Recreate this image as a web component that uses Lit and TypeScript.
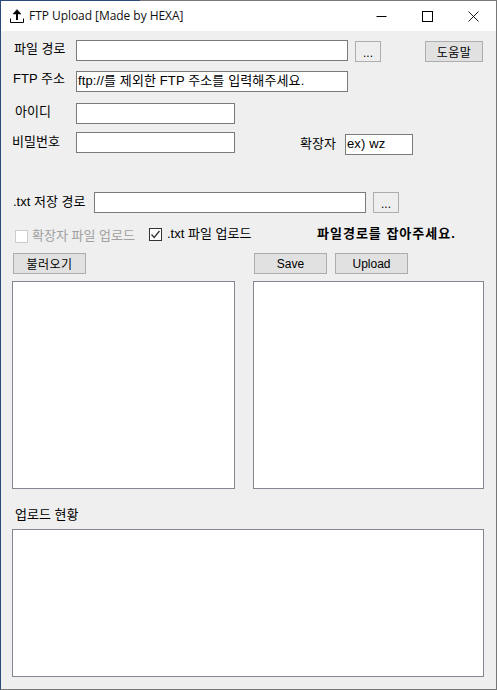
import { LitElement, html, css } from "lit";
import { customElement } from "lit/decorators.js";

@customElement("app-root")
export class AppRoot extends LitElement {
  static styles = css`
    :host { display: block; width: 497px; height: 690px; }
    * { box-sizing: border-box; }
    .window {
      width: 497px; height: 690px; display: flex; flex-direction: column;
      border-left: 1px solid #2b4a7a; border-right: 1px solid #777; border-bottom: 1px solid #777;
      background: #efefef; color: #000;
      font: 13px "Liberation Sans", "Noto Sans CJK KR", sans-serif;
    }
    .topline { height: 1px; flex: none; margin: 0 -1px; background: linear-gradient(90deg, #2b4a7a 0 140px, #7a7a7a 140px 100%); }
    .titlebar { height: 30px; flex: none; background: #fff; display: flex; align-items: center; }
    .app-icon { width: 14px; height: 14px; margin: 0 5px 0 9px; flex: none; }
    .title { font: 12px "Open Sans", sans-serif; flex: 1; color: #111; white-space: nowrap; letter-spacing: -0.05px; margin-top: -1px; }
    .ctl { width: 46px; height: 30px; display: flex; align-items: center; justify-content: center; flex: none; }
    .body { flex: 1; padding: 9px 12px 0 11px; display: flex; flex-direction: column; }
    .row { display: flex; align-items: flex-start; flex: none; }
    .label { white-space: nowrap; line-height: 16px; flex: none; }
    .field { background: #fff; border: 1px solid #7a7a7a; height: 21px; flex: none; line-height: 18px; padding-left: 1px; white-space: nowrap; overflow: hidden; letter-spacing: 0.12px; }
    .btn { height: 21px; flex: none; background: #e1e1e1; border: 1px solid #adadad; display: flex; align-items: center; justify-content: center; font-size: 12px; color: #000; }
    .btn.ko { letter-spacing: 0.5px; }
    .btn.more { background: #eeeeee; width: 26px; margin: 1px 0 0 7px; padding-top: 2px; }
    .w272 { width: 272px; }
    .w159 { width: 159px; }
    .box { background: #fff; border: 1px solid #828790; flex: none; }
    .check { width: 13px; height: 13px; background: #fff; border: 1px solid #333; flex: none; display: flex; align-items: center; justify-content: center; }
    .check.off { border-color: #ccc; }
    .check svg { display: block; }
    .muted { color: #a0a0a0; }
    .bold { font-weight: 700; letter-spacing: 1px; }

    .l-path { width: 64px; padding: 0 0 0 2px; margin-top: 1px; }
    .l-ftp { width: 64px; padding-left: 1px; }
    .l-id { width: 64px; padding-left: 3px; margin-top: 1px; }
    .l-pw { width: 64px; margin-top: 2px; }
    .help { width: 58px; margin: 1px 0 0 44px; }
    .r2 { margin-top: 9px; }
    .r3 { margin-top: 11px; }
    .r4 { margin-top: 8px; height: 23px; }
    .l-ext { width: 45px; margin: 4px 0 0 65px; }
    .ext { width: 68px; margin-top: 2px; }
    .r5 { margin-top: 36px; height: 22px; }
    .l-txt { width: 82px; padding-left: 1px; margin-top: 3px; }
    .f-txt { margin-top: 1px; }
    .b-txt { width: 23px; }
    .r6 { margin-top: 13px; height: 18px; }
    .c1 { margin: 4px 0 0 3px; }
    .c2 { margin-top: 2px; }
    .lc1 { margin: 2px 0 0 4px; width: 117px; }
    .lc2 { margin: 0 0 0 5px; width: 150px; }
    .r7 { margin-top: 9px; }
    .b-load { width: 73px; margin-left: 1px; }
    .b-save { width: 73px; margin-left: 168px; }
    .b-up { width: 73px; margin-left: 8px; }
    .r8 { margin-top: 7px; }
    .list-a { width: 223px; height: 208px; }
    .list-b { width: 231px; height: 208px; margin-left: 18px; }
    .l-status { margin: 18px 0 0 3px; }
    .log { width: 472px; height: 148px; margin-top: 6px; }
  `;

  render() {
    return html`
      <div class="window">
        <div class="topline"></div>
        <div class="titlebar">
          <svg class="app-icon" viewBox="0 0 14 14" fill="none" stroke="#000">
            <path d="M7 11V3" stroke-width="2"/><path d="M7 0.5 3 5h8z" fill="#000" stroke-width="0.5"/><path d="M0.5 9.5v4h13v-4" stroke-width="1"/>
          </svg>
          <div class="title">FTP Upload [Made by HEXA]</div>
          <div class="ctl"><svg width="11" height="11" viewBox="0 0 11 11"><path d="M0.5 5.5h10" stroke="#000" fill="none"/></svg></div>
          <div class="ctl"><svg width="11" height="11" viewBox="0 0 11 11"><rect x="0.5" y="0.5" width="10" height="10" stroke="#000" fill="none"/></svg></div>
          <div class="ctl"><svg width="11" height="11" viewBox="0 0 11 11"><path d="M0.5 0.5l10 10M10.5 0.5l-10 10" stroke="#000" stroke-width="0.9" fill="none"/></svg></div>
        </div>
        <div class="body">
          <div class="row">
            <div class="label l-path">파일 경로</div>
            <div class="field w272"></div>
            <div class="btn more">...</div>
            <div class="btn ko help">도움말</div>
          </div>
          <div class="row r2">
            <div class="label l-ftp">FTP 주소</div>
            <div class="field w272">ftp://를 제외한 FTP 주소를 입력해주세요.</div>
          </div>
          <div class="row r3">
            <div class="label l-id">아이디</div>
            <div class="field w159"></div>
          </div>
          <div class="row r4">
            <div class="label l-pw">비밀번호</div>
            <div class="field w159"></div>
            <div class="label l-ext">확장자</div>
            <div class="field ext">ex) wz</div>
          </div>
          <div class="row r5">
            <div class="label l-txt">.txt 저장 경로</div>
            <div class="field w272 f-txt"></div>
            <div class="btn more b-txt">...</div>
          </div>
          <div class="row r6">
            <div class="check off c1"></div>
            <div class="label muted lc1">확장자 파일 업로드</div>
            <div class="check c2">
              <svg width="11" height="11" viewBox="0 0 11 11"><path d="M1.5 5.5 4.2 8.5 9.5 2" stroke="#333" stroke-width="1.3" fill="none"/></svg>
            </div>
            <div class="label lc2">.txt 파일 업로드</div>
            <div class="label bold">파일경로를 잡아주세요.</div>
          </div>
          <div class="row r7">
            <div class="btn ko b-load">불러오기</div>
            <div class="btn b-save">Save</div>
            <div class="btn b-up">Upload</div>
          </div>
          <div class="row r8">
            <div class="box list-a"></div>
            <div class="box list-b"></div>
          </div>
          <div class="label l-status">업로드 현황</div>
          <div class="box log"></div>
        </div>
      </div>
    `;
  }
}
